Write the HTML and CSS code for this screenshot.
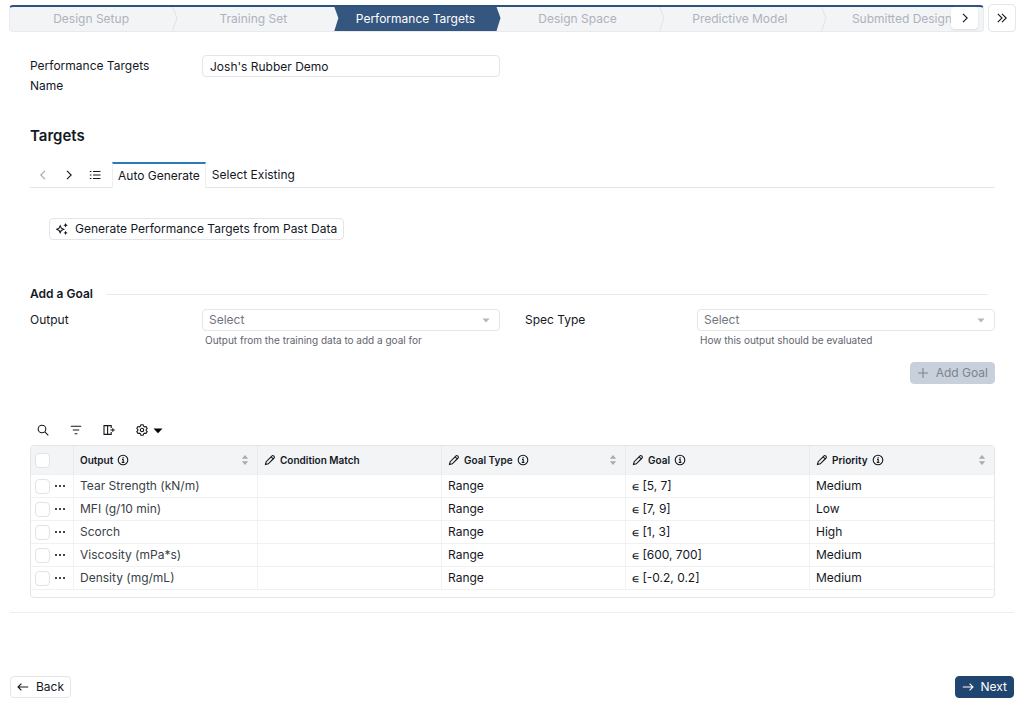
FILE: index.html
```html
<!DOCTYPE html>
<html lang="en">
<head>
  <meta charset="utf-8" />
  <meta name="viewport" content="width=device-width, initial-scale=1" />
  <title>Performance Targets</title>
  <link rel="stylesheet" href="styles.css">
</head>
<body>
  <!-- shared icons -->
  <svg class="sprite" aria-hidden="true">
    <symbol id="pencil" viewBox="0 0 12 12">
      <path d="M1.5 10.5 L2.2 7.7 L8 1.9 Q8.9 1.1 9.9 2.1 Q10.9 3.1 10.1 4 L4.3 9.8 Z M7.1 2.8 L9.2 4.9" />
    </symbol>
    <symbol id="info" viewBox="0 0 12 12">
      <circle cx="6" cy="6" r="4.8" />
      <path d="M5 5.4 H6.2 V8.4 M4.8 8.4 H7.4 M5.6 3.6 H6.6" />
    </symbol>
    <symbol id="dots" viewBox="0 0 12 12">
      <g fill="currentColor" stroke="none"><circle cx="2" cy="6" r="1.1" /><circle cx="6" cy="6" r="1.1" /><circle cx="10" cy="6" r="1.1" /></g>
    </symbol>
    <symbol id="sort" viewBox="0 0 12 12">
      <path fill="currentColor" stroke="none" d="M6 1 L9.2 4.8 H2.8 Z M6 11 L2.8 7.2 H9.2 Z" />
    </symbol>
    <symbol id="caret" viewBox="0 0 12 12">
      <path fill="currentColor" stroke="none" d="M2.4 4.4 H9.6 L6 8.4 Z" />
    </symbol>
    <symbol id="chevron" viewBox="0 0 12 12">
      <path d="M4 1.8 L8.2 6 L4 10.2" />
    </symbol>
  </svg>

  <header class="top">
    <nav class="stepper" aria-label="Steps">
      <button type="button" class="step">Design Setup</button>
      <button type="button" class="step">Training Set<svg class="sep" viewBox="0 0 6 24"><path d="M0.5 0 L5 11 L0.5 24" /></svg></button>
      <button type="button" class="step active" aria-current="step"><span>Performance Targets</span></button>
      <button type="button" class="step">Design Space</button>
      <button type="button" class="step">Predictive Model<svg class="sep" viewBox="0 0 6 24"><path d="M0.5 0 L5 11 L0.5 24" /></svg></button>
      <button type="button" class="step">Submitted Design<svg class="sep" viewBox="0 0 6 24"><path d="M0.5 0 L5 11 L0.5 24" /></svg></button>
      <button type="button" class="scroll-next" aria-label="More steps"><svg class="icon"><use href="#chevron" /></svg></button>
    </nav>
    <button type="button" class="expand" aria-label="Expand panel">
      <svg class="icon" viewBox="0 0 12 12"><path d="M1.8 1.8 L6 6 L1.8 10.2 M6 1.8 L10.2 6 L6 10.2" /></svg>
    </button>
  </header>

  <main>
    <div class="fields">
      <div class="field">
        <label for="name">Performance Targets Name</label>
        <input type="text" id="name" value="Josh's Rubber Demo" />
      </div>
    </div>

    <h1>Targets</h1>
    <div class="tabs">
      <button type="button" class="tab-icon off" aria-label="Previous tab" disabled><svg class="icon" viewBox="0 0 12 12"><path d="M8 1.8 L3.8 6 L8 10.2" /></svg></button>
      <button type="button" class="tab-icon" aria-label="Next tab"><svg class="icon"><use href="#chevron" /></svg></button>
      <button type="button" class="tab-icon" aria-label="All tabs"><svg class="icon" viewBox="0 0 12 12"><path d="M0.8 2.5 H2.4 M0.8 6 H2.4 M0.8 9.5 H2.4 M4 2.5 H11.5 M4 6 H11.5 M4 9.5 H11.5" /></svg></button>
      <button type="button" class="tab selected">Auto Generate</button>
      <button type="button" class="tab">Select Existing</button>
    </div>

    <button type="button" class="btn generate">
      <svg class="icon" viewBox="0 0 12 12"><path d="M4.2 2.8 L5.3 5.2 L7.7 6.3 L5.3 7.4 L4.2 9.8 L3.1 7.4 L0.7 6.3 L3.1 5.2 Z" /><path fill="currentColor" stroke="none" d="M9.6 0 L10.3 1.5 L11.8 2.2 L10.3 2.9 L9.6 4.4 L8.9 2.9 L7.4 2.2 L8.9 1.5 Z M9.6 7.8 L10.3 9.2 L11.7 9.9 L10.3 10.6 L9.6 12 L8.9 10.6 L7.5 9.9 L8.9 9.2 Z" /></svg>
      Generate Performance Targets from Past Data
    </button>

    <h2>Add a Goal</h2>
    <div class="fields">
      <div class="field">
        <label for="output">Output</label>
        <div>
          <div class="select">
            <select id="output" aria-describedby="output-help"><option>Select</option></select>
            <svg class="icon"><use href="#caret" /></svg>
          </div>
          <p class="help" id="output-help">Output from the training data to add a goal for</p>
        </div>
      </div>
      <div class="field">
        <label for="spec">Spec Type</label>
        <div>
          <div class="select">
            <select id="spec" aria-describedby="spec-help"><option>Select</option></select>
            <svg class="icon"><use href="#caret" /></svg>
          </div>
          <p class="help" id="spec-help">How this output should be evaluated</p>
        </div>
      </div>
    </div>
    <button type="button" class="btn add" disabled>
      <svg class="icon" viewBox="0 0 12 12"><path d="M6 1 V11 M1 6 H11" /></svg>
      Add Goal
    </button>

    <div class="toolbar">
      <button type="button" aria-label="Search"><svg class="icon" viewBox="0 0 12 12"><circle cx="5" cy="5" r="3.8" /><path d="M7.8 7.8 L11.3 11.3" /></svg></button>
      <button type="button" aria-label="Filter"><svg class="icon" viewBox="0 0 12 12"><path d="M0.8 2.2 H11.2 M2.8 6 H9.2 M4.6 9.8 H7.4" /></svg></button>
      <button type="button" aria-label="Add column"><svg class="icon" viewBox="0 0 12 12"><path d="M8.2 4 V1.6 H1 V10.4 H8.2 V8 M4.6 1.6 V10.4 M7.4 6 H11.8 M9.8 4.2 V7.8" /></svg></button>
      <button type="button" class="settings" aria-label="Settings">
        <svg class="icon" viewBox="0 0 12 12"><circle cx="6" cy="6" r="1.7" /><path d="M4.9 0.8 H7.1 L7.6 2.2 L8.6 2.8 L10.1 2.5 L11.2 4.4 L10.2 5.5 V6.5 L11.2 7.6 L10.1 9.5 L8.6 9.2 L7.6 9.8 L7.1 11.2 H4.9 L4.4 9.8 L3.4 9.2 L1.9 9.5 L0.8 7.6 L1.8 6.5 V5.5 L0.8 4.4 L1.9 2.5 L3.4 2.8 L4.4 2.2 Z" /></svg>
        <svg class="icon black" viewBox="0 0 12 12"><path fill="currentColor" stroke="none" d="M1.5 4.4 H10.5 L6 9.2 Z" /></svg>
      </button>
    </div>

    <div class="table-box">
      <table>
        <thead>
          <tr>
            <th class="pick"><input type="checkbox" aria-label="Select all" /></th>
            <th><div class="head">Output <svg class="icon"><use href="#info" /></svg><svg class="icon sort"><use href="#sort" /></svg></div></th>
            <th><div class="head"><svg class="icon"><use href="#pencil" /></svg> Condition Match</div></th>
            <th><div class="head"><svg class="icon"><use href="#pencil" /></svg> Goal Type <svg class="icon"><use href="#info" /></svg><svg class="icon sort"><use href="#sort" /></svg></div></th>
            <th><div class="head"><svg class="icon"><use href="#pencil" /></svg> Goal <svg class="icon"><use href="#info" /></svg></div></th>
            <th><div class="head"><svg class="icon"><use href="#pencil" /></svg> Priority <svg class="icon"><use href="#info" /></svg><svg class="icon sort"><use href="#sort" /></svg></div></th>
          </tr>
        </thead>
        <tbody>
          <tr>
            <td class="pick"><div class="pick-row"><input type="checkbox" aria-label="Select Tear Strength" /><button type="button" aria-label="Row menu"><svg class="icon"><use href="#dots" /></svg></button></div></td>
            <td class="output">Tear Strength (kN/m)</td><td></td><td>Range</td><td><span class="in">∈</span> [5, 7]</td><td>Medium</td>
          </tr>
          <tr>
            <td class="pick"><div class="pick-row"><input type="checkbox" aria-label="Select MFI" /><button type="button" aria-label="Row menu"><svg class="icon"><use href="#dots" /></svg></button></div></td>
            <td class="output">MFI (g/10 min)</td><td></td><td>Range</td><td><span class="in">∈</span> [7, 9]</td><td>Low</td>
          </tr>
          <tr>
            <td class="pick"><div class="pick-row"><input type="checkbox" aria-label="Select Scorch" /><button type="button" aria-label="Row menu"><svg class="icon"><use href="#dots" /></svg></button></div></td>
            <td class="output">Scorch</td><td></td><td>Range</td><td><span class="in">∈</span> [1, 3]</td><td>High</td>
          </tr>
          <tr>
            <td class="pick"><div class="pick-row"><input type="checkbox" aria-label="Select Viscosity" /><button type="button" aria-label="Row menu"><svg class="icon"><use href="#dots" /></svg></button></div></td>
            <td class="output">Viscosity (mPa*s)</td><td></td><td>Range</td><td><span class="in">∈</span> [600, 700]</td><td>Medium</td>
          </tr>
          <tr>
            <td class="pick"><div class="pick-row"><input type="checkbox" aria-label="Select Density" /><button type="button" aria-label="Row menu"><svg class="icon"><use href="#dots" /></svg></button></div></td>
            <td class="output">Density (mg/mL)</td><td></td><td>Range</td><td><span class="in">∈</span> [-0.2, 0.2]</td><td>Medium</td>
          </tr>
        </tbody>
      </table>
    </div>
  </main>

  <footer>
    <button type="button" class="btn"><svg class="icon" viewBox="0 0 12 12"><path d="M11.2 6 H1 M4.4 2.6 L1 6 L4.4 9.4" /></svg>Back</button>
    <button type="button" class="btn primary"><svg class="icon" viewBox="0 0 12 12"><path d="M0.8 6 H11 M7.6 2.6 L11 6 L7.6 9.4" /></svg>Next</button>
  </footer>
</body>
</html>
```
FILE: styles.css
```css
* {
  box-sizing: border-box;
}
body {
  margin: 0;
  min-height: 100vh;
  display: flex;
  flex-direction: column;
  font-family: Inter, "Liberation Sans", sans-serif;
  font-size: 12px;
  font-weight: 400;
  line-height: 20px;
  color: #14181f;
  background: #fff;
}
button, input, select {
  font: inherit;
  color: inherit;
}
button {
  margin: 0;
  padding: 0;
  border: none;
  background: none;
  cursor: pointer;
}
.sprite {
  display: none;
}
.icon {
  width: 12px;
  height: 12px;
  flex: none;
  display: block;
  fill: none;
  stroke: currentColor;
  stroke-width: 1.1;
}

/* stepper */
.top {
  display: flex;
  gap: 4px;
  padding: 4px 8px 0 9px;
}
.stepper {
  flex: 1;
  position: relative;
  display: flex;
  height: 27px;
  margin-top: 1px;
  border: 1px solid #e8eaed;
  border-top: 2px solid #2c5282;
  border-radius: 4px;
  background: #f2f4f6;
}
.step {
  flex: 1 1 0;
  position: relative;
  color: #aeb2bc;
  white-space: nowrap;
}
.sep {
  position: absolute;
  left: 0;
  top: 0;
  width: 6px;
  height: 100%;
  fill: none;
  stroke: #dfe2e7;
}
.step.active {
  color: #fff;
}
.step.active::before {
  content: "";
  position: absolute;
  inset: 0 -4px 0 0;
  background: #34567f;
  clip-path: polygon(0 0, calc(100% - 4px) 0, 100% 46%, calc(100% - 4px) 100%, 0 100%, 4px 46%);
}
.step.active span {
  position: relative;
}
.scroll-next {
  position: absolute;
  right: 5px;
  top: 0;
  width: 27px;
  height: 22px;
  display: grid;
  place-items: center;
  border-radius: 4px;
  background: #fff;
  box-shadow: 0 1px 2px #d9dce1;
}
.expand {
  width: 28px;
  height: 28px;
  display: grid;
  place-items: center;
  border: 1px solid #e5e7ea;
  border-radius: 4px;
}

/* form */
main {
  margin: 0 10px;
  padding: 23px 19px 14px 20px;
  border-bottom: 1px solid #eeeff1;
}
.fields {
  display: grid;
  grid-template-columns: 1fr 1fr;
  gap: 25px;
}
.field {
  display: grid;
  grid-template-columns: 172px 1fr;
  align-items: start;
}
.field label {
  padding: 1px 40px 0 0;
}
input[type="text"], select {
  width: 100%;
  height: 22px;
  padding: 0 7px;
  border: 1px solid #e3e5e9;
  border-radius: 4px;
  background: #fff;
}
.select {
  position: relative;
}
select {
  display: block;
  padding: 0 6px;
  appearance: none;
  color: #70757f;
}
.select .icon {
  position: absolute;
  right: 8px;
  top: 5px;
  color: #b3b7c0;
}
.help {
  margin: 0 3px;
  font-size: 10px;
  line-height: 18px;
  color: #5f6570;
}
h1 {
  margin: 30px 0 16px;
  font-size: 15px;
  font-weight: 600;
}
.tabs {
  display: flex;
  height: 26px;
  border-bottom: 1px solid #e3e5e8;
}
.tab-icon {
  width: 26px;
  display: grid;
  place-items: center;
}
.tab-icon:nth-child(3) {
  margin-right: 4px;
}
.tab-icon.off {
  color: #a3a7af;
}
.tab {
  padding: 0 6px;
}
.tab.selected {
  height: 26px;
  padding: 0 5px;
  border: 1px solid #eceef0;
  border-top: 2px solid #2b7bb9;
  border-bottom: none;
  background: #fff;
}
.btn {
  display: flex;
  align-items: center;
  gap: 7px;
  height: 22px;
  padding: 0 6px;
  border: 1px solid #e3e5e9;
  border-radius: 4px;
  background: #fff;
}
.generate {
  margin: 30px 0 0 19px;
}
h2 {
  display: flex;
  align-items: center;
  gap: 13px;
  margin: 44px 7px 5px 0;
  font-size: 12px;
  font-weight: 600;
}
h2::after {
  content: "";
  flex: 1;
  height: 1px;
  background: #e8eaed;
}
.add {
  margin: 13px 0 0 auto;
  border-color: #c7d0db;
  background: #c7d0db;
  color: #7d858f;
}

/* table */
.toolbar {
  display: flex;
  gap: 21px;
  padding: 40px 7px 9px;
}
.toolbar .settings {
  display: flex;
  gap: 4px;
}
.black {
  color: #000;
}
.table-box {
  padding-bottom: 7px;
  overflow: hidden;
  border: 1px solid #e3e5e8;
  border-radius: 4px;
}
table {
  width: 100%;
  table-layout: fixed;
  border-collapse: separate;
  border-spacing: 0;
}
th, td {
  height: 23px;
  padding: 0 6px;
  border-right: 1px solid #f0f1f3;
  border-bottom: 1px solid #f0f1f3;
  text-align: left;
}
th:last-child, td:last-child {
  border-right: none;
}
th {
  height: 29px;
  font-size: 10px;
  font-weight: 600;
  background: #f2f4f6;
  border-right: 1px dotted #dddfe4;
}
th.pick, td.pick {
  width: 43px;
  padding: 0 4px;
}
.head, .pick-row {
  display: flex;
  align-items: center;
  gap: 4px;
}
.sort {
  margin-left: auto;
  color: #a6abb5;
}
input[type="checkbox"] {
  appearance: none;
  display: block;
  width: 15px;
  height: 15px;
  margin: 0;
  border: 1px solid #e1e3e7;
  border-radius: 4px;
  background: #fff;
}
td.output {
  color: #3a3f47;
}
.in {
  font-size: 8px;
  font-weight: 600;
}

footer {
  display: flex;
  justify-content: space-between;
  margin-top: auto;
  padding: 0 10px 9px;
}
.primary {
  border-color: #1f4570;
  background: #1f4570;
  color: #fff;
}
```
